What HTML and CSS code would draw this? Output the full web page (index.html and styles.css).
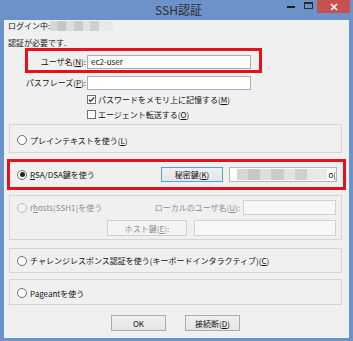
FILE: index.html
```html
<!DOCTYPE html>
<html lang="ja">
<head>
    <meta charset="UTF-8">
    <title>SSH認証</title>
    <link rel="stylesheet" href="styles.css">
</head>
<body>

<div class="window">
    <div class="titlebar">
        <div></div>
        <div class="title">SSH認証</div>
        <div class="controls">
            <span class="ctl-min"></span>
            <span class="ctl-max"></span>
            <span class="ctl-close">
                <svg width="8" height="8" viewBox="0 0 8 8"><path d="M1 1L7 7M7 1L1 7" stroke="#fff" stroke-width="1.6"/></svg>
            </span>
        </div>
    </div>

    <div class="client">
        <div class="info">
            <div class="info-line">ログイン中:<span class="blur blur-host"></span></div>
            <div class="info-line">認証が必要です.</div>
        </div>

        <div class="mark user-box">
            <label class="field-label">ユーザ名(<u>N</u>):</label>
            <div class="textbox">ec2-user</div>
        </div>

        <div class="pass-row">
            <label class="field-label">パスフレーズ(<u>P</u>):</label>
            <div class="textbox"></div>
        </div>

        <div class="check-row">
            <svg class="check" width="9" height="9" viewBox="0 0 9 9">
                <rect x="0.5" y="0.5" width="8" height="8" fill="#fff" stroke="#6f6f6f"/>
                <path d="M1.8 4.6L3.6 6.4L7.2 2.4" fill="none" stroke="#222" stroke-width="1.2"/>
            </svg>
            <span>パスワードをメモリ上に記憶する(<u>M</u>)</span>
        </div>
        <div class="check-row">
            <svg class="check" width="9" height="9" viewBox="0 0 9 9">
                <rect x="0.5" y="0.5" width="8" height="8" fill="#fff" stroke="#6f6f6f"/>
            </svg>
            <span>エージェント転送する(<u>O</u>)</span>
        </div>

        <div class="group group-plain">
            <span class="radio"></span>
            <span>プレインテキストを使う(<u>L</u>)</span>
        </div>

        <div class="mark rsa-box">
            <div class="radio-label">
                <span class="radio checked"></span>
                <span><u>R</u>SA/DSA鍵を使う</span>
            </div>
            <div class="button focused">秘密鍵(<u>K</u>)</div>
            <div class="textbox key-path"><span class="blur blur-path"></span><span>o(</span></div>
        </div>

        <div class="group group-rhosts">
            <div class="rhosts-row">
                <div class="radio-label disabled">
                    <span class="radio off"></span>
                    <span>r<u>h</u>osts(SSH1)を使う</span>
                </div>
                <span class="local-label disabled">ローカルのユーザ名(<u>U</u>):</span>
                <div class="textbox off local-user"></div>
            </div>
            <div class="hostkey-row">
                <div class="button off">ホスト鍵(<u>E</u>):</div>
                <div class="textbox off host-key"></div>
            </div>
        </div>

        <div class="group group-challenge">
            <span class="radio"></span>
            <span>チャレンジレスポンス認証を使う(キーボードインタラクティブ)(<u>C</u>)</span>
        </div>

        <div class="group group-pageant">
            <span class="radio"></span>
            <span>Pa<u>g</u>eantを使う</span>
        </div>

        <div class="actions">
            <div class="button">OK</div>
            <div class="button">接続断(<u>D</u>)</div>
        </div>
    </div>
</div>

</body>
</html>
```

FILE: styles.css
```css
body {
    margin: 0;
    font-family: "Noto Sans CJK JP", "Noto Sans", sans-serif;
    font-size: 8px;
    color: #111;
}

u {
    text-decoration: underline;
    text-underline-offset: 1px;
}

.window {
    width: 353px;
    height: 341px;
    background-color: #6b92c9;
    display: flex;
    flex-direction: column;
}

/* title bar */
.titlebar {
    height: 20px;
    flex-shrink: 0;
    display: grid;
    grid-template-columns: 1fr auto 1fr;
}

.title {
    font-size: 12px;
    line-height: 19px;
    color: #2e2e2e;
    padding-left: 4px;
}

.controls {
    justify-self: end;
    display: flex;
    align-items: flex-start;
    margin-right: 3px;
}

.ctl-min {
    width: 8px;
    height: 2px;
    background-color: #1c1c1c;
    margin: 6px 9px 0 0;
}

.ctl-max {
    width: 7px;
    height: 4px;
    border: 1px solid #2a2a2a;
    border-top-width: 2px;
    margin: 2px 4px 0 0;
}

.ctl-close {
    width: 33px;
    height: 13px;
    background-color: #c75050;
    display: flex;
    align-items: center;
    justify-content: center;
}

/* client area */
.client {
    height: 318px;
    flex-shrink: 0;
    margin: 0 4px;
    background-color: #f0f0f0;
    white-space: nowrap;
}

.info {
    padding-left: 4px;
}

.info-line {
    height: 11px;
    line-height: 11px;
    display: flex;
    align-items: center;
}

.info-line + .info-line {
    margin-top: 6px;
}

.blur {
    display: inline-block;
    background: linear-gradient(90deg, #d6d6d6 0 12%, #c6c6c6 12% 25%, #dedede 25% 38%, #cbcbcb 38% 52%, #e2e2e2 52% 64%, #d0d0d0 64% 78%, #e8e8e8 78% 100%);
}

.blur-host {
    width: 63px;
    height: 10px;
}

.blur-path {
    width: 92px;
    height: 11px;
    margin-right: 1px;
}

/* red annotation frames */
.mark {
    box-sizing: border-box;
    border: 3px solid #e5111b;
}

.user-box {
    margin-left: 21px;
    width: 237px;
    height: 25px;
    padding-top: 4px;
    display: flex;
    align-items: flex-start;
}

.field-label {
    width: 58px;
    flex-shrink: 0;
    text-align: right;
    line-height: 14px;
    margin-right: 1px;
}

.textbox {
    box-sizing: border-box;
    width: 164px;
    height: 14px;
    background-color: #fff;
    border: 1px solid #abadb3;
    line-height: 12px;
    padding-left: 3px;
    display: flex;
    align-items: center;
}

.pass-row {
    margin-top: 3px;
    height: 14px;
    display: flex;
}

.pass-row .field-label {
    width: 82px;
}

.check-row {
    height: 11px;
    margin-top: 4px;
    padding-left: 83px;
    display: flex;
    align-items: center;
}

.check {
    margin-right: 2px;
}

/* radio buttons */
.radio {
    box-sizing: border-box;
    width: 10px;
    height: 10px;
    border: 1px solid #6f6f6f;
    border-radius: 50%;
    background-color: #fff;
    margin-right: 3px;
    display: flex;
    align-items: center;
    justify-content: center;
    flex-shrink: 0;
}

.radio.checked::after {
    content: "";
    width: 5px;
    height: 5px;
    border-radius: 50%;
    background-color: #222;
}

.radio.off {
    border-color: #bcbcbc;
    background-color: #f4f4f4;
}

.radio-label {
    display: flex;
    align-items: center;
}

.disabled {
    color: #8d8d8d;
}

/* group boxes */
.group {
    box-sizing: border-box;
    margin-left: 5px;
    width: 333px;
    border: 1px solid #d5d5d5;
    padding-left: 7px;
    display: flex;
    align-items: center;
}

.group-plain {
    margin-top: 4px;
    height: 29px;
    padding-top: 3px;
}

.rsa-box {
    margin: 6px 0 0 3px;
    width: 339px;
    height: 31px;
    padding: 0 6px 0 7px;
    display: flex;
    align-items: center;
}

.rsa-box .radio-label {
    width: 144px;
}

.button {
    box-sizing: border-box;
    width: 62px;
    height: 15px;
    border: 1px solid #acacac;
    background: linear-gradient(#f0f0f0, #e5e5e5);
    display: flex;
    align-items: center;
    justify-content: center;
}

.button.focused {
    border-color: #4fa3ea;
}

.button.off {
    width: 80px;
    height: 16px;
    border-color: #cfcfcf;
    background: #f4f4f4;
    color: #8d8d8d;
}

.key-path {
    width: 108px;
    height: 15px;
    margin-left: 6px;
    border-color: #b5b5b5;
    padding-left: 7px;
}

.group-rhosts {
    margin-top: 5px;
    height: 45px;
    padding: 4px 5px 0 7px;
    display: block;
}

.rhosts-row {
    display: flex;
    align-items: center;
    height: 15px;
}

.rhosts-row .radio-label {
    flex: 1;
}

.local-label {
    margin-right: 3px;
}

.textbox.off {
    border-color: #d2d2d2;
    background-color: #f7f7f7;
}

.local-user {
    width: 93px;
    height: 15px;
}

.hostkey-row {
    margin: 5px 0 0 90px;
    display: flex;
}

.host-key {
    width: 142px;
    height: 16px;
    margin-left: 7px;
}

.group-challenge {
    margin-top: 8px;
    height: 25px;
}

.group-pageant {
    margin-top: 6px;
    height: 26px;
    padding-top: 2px;
}

.actions {
    margin-top: 10px;
    padding-left: 107px;
    display: flex;
    gap: 19px;
}

.actions .button {
    width: 55px;
    height: 16px;
}
```
